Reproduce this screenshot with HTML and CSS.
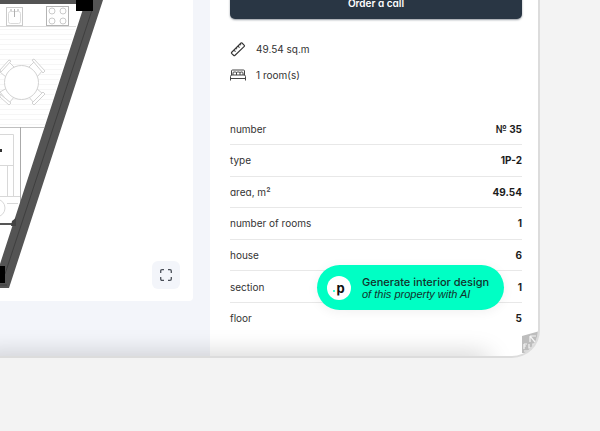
FILE: index.html
```html
<!DOCTYPE html>
<html lang="en">
<head>
  <meta charset="UTF-8" />
  <meta name="viewport" content="width=device-width, initial-scale=1" />
  <title>Apartment 35</title>
  <link rel="stylesheet" href="styles.css">
</head>
<body>
  <main class="window">
    <section class="plan">
      <div class="plan-card">
        <svg class="floor-plan" viewBox="0 0 120 301" width="120" height="301" role="img" aria-label="Floor plan">
          <!-- parquet -->
          <g stroke="#f6f6f6" stroke-width="1">
            <path d="M0 29.500H75M0 34.500H73M0 39.500H72M0 44.500H70M0 49.500H69M0 54.500H67M0 59.500H66M0 64.500H64M0 69.500H62M0 74.500H61M0 79.500H59M0 84.500H57M0 89.500H56M0 94.500H54M0 99.500H53M0 104.500H51M0 109.500H50M0 114.500H48M0 119.500H47M0 124.500H45"/>
          </g>
          <path d="M0 26.500H76" stroke="#dcdcdc"/>
          <!-- sink and hob -->
          <g fill="none" stroke="#cacaca">
            <rect x="6.500" y="7.500" width="16" height="18" fill="#fff"/>
            <rect x="8.500" y="11.500" width="12" height="12" rx="2" stroke="#dadada"/>
            <path d="M14.500 9V17M10 10H12M17 10H19" stroke="#b0b0b0"/>
            <rect x="46.500" y="6.500" width="22" height="19" fill="#fff" stroke="#b4b4b4"/>
            <circle cx="52" cy="11" r="3"/><circle cx="63" cy="11" r="3"/>
            <circle cx="52" cy="21" r="3"/><circle cx="63" cy="21" r="3"/>
          </g>
          <!-- dining table -->
          <g fill="#fff" stroke="#d2d2d2">
            <path d="M0 72L9 62L15 68L6 77Z"/><path d="M0 70L9 60L11 61L1 72Z"/>
            <path d="M28 68L34 62L43 70L37 77Z"/><path d="M32 60L34 59L45 71L43 73Z"/>
            <path d="M0 92L7 88L15 96L9 103Z"/><path d="M0 94L11 103L9 105L0 97Z"/>
            <path d="M28 96L36 88L43 94L34 103Z"/><path d="M43 92L45 94L34 105L32 103Z"/>
            <circle cx="21.500" cy="82.500" r="17"/>
          </g>
          <!-- bedroom -->
          <path d="M0 127.500H46L20 208V222H0Z" fill="#fff"/>
          <g fill="none" stroke="#cfcfcf">
            <path d="M0 127.500H44" stroke="#c0c0c0"/>
            <path d="M20.500 127V203" stroke="#aaa"/>
            <path d="M0 134.500H13.500V196M7.500 165V196M0 165.500H14M0 196.500H20M7 203.500H18" stroke="#d8d8d8"/>
            <circle cx="-4" cy="208" r="9" stroke="#d8d8d8"/>
          </g>
          <path d="M0 149H2V152H0Z" fill="#333"/>
          <path d="M0 224H14" stroke="#555" stroke-width="2"/>
          <!-- outer walls -->
          <path d="M0 0H103L9 288H0V264L83 9V4H0Z" fill="#545454"/>
          <path d="M92 10L5 274M0 285H7" fill="none" stroke="#3f3f3f"/>
          <path d="M12 221L16 218V226H11Z" fill="#444"/>
          <path d="M76 0H93V11H76ZM0 266H5V283H0Z" fill="#000"/>
        </svg>
        <button class="expand-btn" type="button" aria-label="Full screen">
          <svg viewBox="0 0 12 12" width="12" height="12" fill="none" stroke="#4a4f58" stroke-width="1.300">
            <path d="M.7 4V2Q.7.7 2 .7H4M8 .7H10Q11.300.7 11.300 2V4M11.300 8V10Q11.300 11.300 10 11.300H8M4 11.300H2Q.7 11.300.7 10V8"/>
          </svg>
        </button>
      </div>
    </section>

    <section class="details">
      <button class="call-btn" type="button">Order a call</button>

      <ul class="features">
        <li>
          <svg viewBox="0 0 16 16" width="16" height="16" fill="none" stroke="#333" stroke-width="1.100" stroke-linejoin="round">
            <path d="M1.500 11.500L11 2Q11.500 1.500 12 2L14.300 4.300Q14.800 4.800 14.300 5.300L4.800 14.500Q4.300 15 3.800 14.500L1.500 12.300Q1.200 11.900 1.500 11.500ZM4 9.200L5.500 10.700M6 7.200L7 8.200M8 5.200L9.500 6.700M10 3.200L11 4.200"/>
          </svg>
          49.54 sq.m
        </li>
        <li>
          <svg viewBox="0 0 16 16" width="16" height="16" fill="none" stroke="#444" stroke-linejoin="round">
            <path d="M1.500 8V4Q1.500 3 2.500 3H13.500Q14.500 3 14.500 4V8M.5 13.500V9.500Q.5 8 2 8H14Q15.500 8 15.500 9.500V13.500M.5 11.500H15.500M3 8V6Q3 5 4 5H5.500Q6.500 5 6.500 6V8M6.500 6Q6.500 5 7.500 5H9Q10 5 10 6V8M10 6Q10 5 11 5H12Q13 5 13 6V8"/>
          </svg>
          1 room(s)
        </li>
      </ul>

      <table class="specs">
        <tr><th scope="row">number</th><td>№ 35</td></tr>
        <tr><th scope="row">type</th><td>1P-2</td></tr>
        <tr><th scope="row">area, m²</th><td>49.54</td></tr>
        <tr><th scope="row">number of rooms</th><td>1</td></tr>
        <tr><th scope="row">house</th><td>6</td></tr>
        <tr><th scope="row">section</th><td>1</td></tr>
        <tr><th scope="row">floor</th><td>5</td></tr>
      </table>
    </section>

    <svg class="corner-mark" viewBox="0 0 18 22" width="18" height="22" aria-hidden="true">
      <path d="M0 5L18 0V16L12 22H0Z" fill="#bdbdbd"/>
      <path d="M8 5H14M8 5V11M8 5L13 11M2 13V18M2 13H5M2 15H4M7 13V17H9M11 17V13H13V17M2 20H12" fill="none" stroke="#f4f4f4" stroke-width="1.200"/>
    </svg>

    <button class="ai-btn" type="button">
      <span class="ai-logo"><i></i>p</span>
      <span class="ai-text">
        <strong>Generate interior design</strong>
        <em>of this property with AI</em>
      </span>
    </button>
  </main>
</body>
</html>
```
FILE: styles.css
```css
* {
  box-sizing: border-box;
}
body {
  margin: 0;
  padding: 0 60px 0 0;
  background-color: #f3f3f3;
  color: #333;
  font-family: Inter, sans-serif;
  font-feature-settings: "cv11";
  font-size: 10px;
  line-height: 16px;
  overflow: hidden;
}
button {
  font: inherit;
  font-feature-settings: inherit;
  border: 0;
  cursor: pointer;
}
.window {
  position: relative;
  display: grid;
  grid-template-columns: 210px 1fr;
  background-color: #fff;
  border: 2px solid #dcdcdc;
  border-width: 0 2px 2px 0;
  border-radius: 0 0 28px 0;
  overflow: hidden;
}
/* soft shade along the bottom edge */
.window::after {
  content: "";
  position: absolute;
  left: -20px;
  right: 50px;
  bottom: -20px;
  height: 20px;
  box-shadow: 0 0 26px rgba(0, 0, 0, 0.22);
  pointer-events: none;
}
.plan {
  background-color: #f3f5fa;
  padding: 0 17px 55px 0;
}
.plan-card {
  display: flex;
  justify-content: space-between;
  align-items: flex-end;
  background-color: #fff;
  border-radius: 0 0 4px 0;
}
.floor-plan {
  display: block;
}
.expand-btn {
  display: flex;
  align-items: center;
  justify-content: center;
  width: 28px;
  height: 28px;
  margin: 0 13px 12px 0;
  padding: 0;
  background-color: #f3f5fa;
  border-radius: 6px;
}
.details {
  padding: 0 16px 0 20px;
}
.call-btn {
  display: block;
  width: 100%;
  height: 32px;
  margin-top: -13px;
  background-color: #293644;
  border-radius: 5px;
  box-shadow: 0 1px 2px rgba(41, 54, 68, 0.5);
  color: #fff;
  font-weight: 600;
}
.features {
  display: grid;
  gap: 10px;
  margin: 22px 0 31px;
  padding: 0;
  list-style: none;
}
.features li {
  display: flex;
  align-items: center;
  gap: 10px;
}
.specs {
  width: 100%;
  height: 219px;
  border-collapse: collapse;
}
.specs tr + tr {
  border-top: 1px solid #e8e8e8;
}
.specs th,
.specs td {
  padding: 0;
}
.specs th {
  font-weight: 400;
  text-align: left;
}
.specs td {
  color: #1c1c1c;
  font-weight: 700;
  text-align: right;
}
.corner-mark {
  position: absolute;
  right: -2px;
  bottom: 3px;
}
.ai-btn {
  position: absolute;
  right: 34px;
  bottom: 46px;
  z-index: 1;
  display: flex;
  align-items: center;
  gap: 11px;
  width: 187px;
  height: 45px;
  padding: 0 10px;
  background-color: #00ffc4;
  border-radius: 23px;
  box-shadow: 0 2px 12px rgba(0, 0, 0, 0.06);
  color: #12332c;
  text-align: left;
  white-space: nowrap;
}
.ai-logo {
  display: flex;
  align-items: center;
  justify-content: center;
  gap: 1px;
  width: 24px;
  height: 24px;
  flex: none;
  background-color: #fff;
  border-radius: 50%;
  color: #111;
  font-size: 13px;
  font-weight: 700;
}
.ai-logo i {
  width: 2px;
  height: 2px;
  margin-top: 6px;
  background-color: #00ffc4;
  border-radius: 50%;
}
.ai-text {
  display: grid;
  font-family: "Liberation Sans", sans-serif;
  font-size: 11px;
  line-height: 12px;
}
.ai-text strong {
  font-family: Inter, sans-serif;
  font-feature-settings: normal;
  font-weight: 500;
}
```
